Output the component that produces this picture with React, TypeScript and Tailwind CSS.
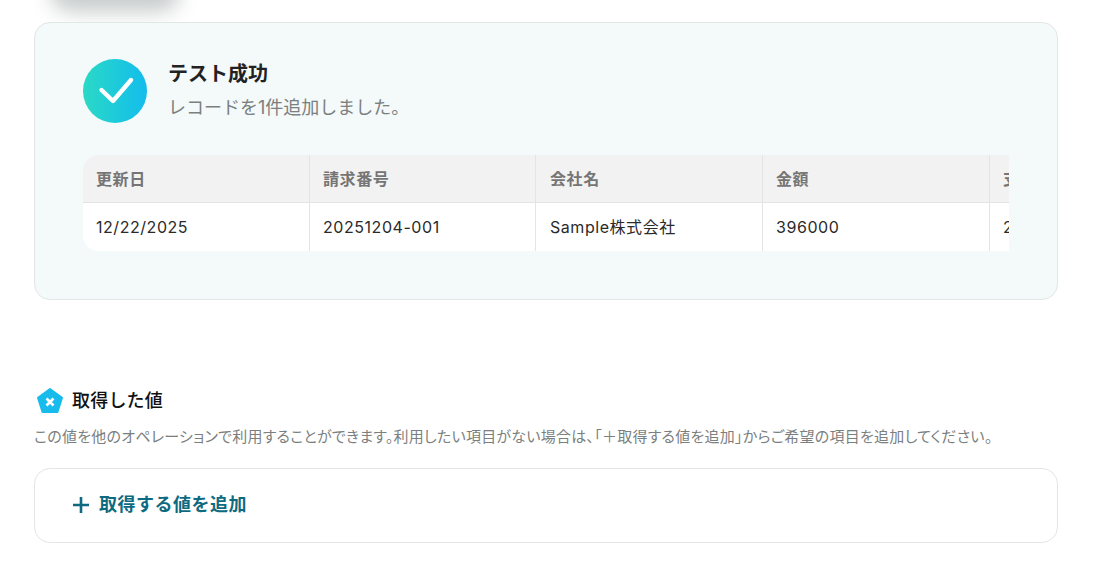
import React from 'react';

const columns = [
  { label: '更新日', value: '12/22/2025', width: 'w-[226px]', pad: 'pl-[13px]' },
  { label: '請求番号', value: '20251204-001', width: 'w-[226px]', pad: 'pl-[13px]' },
  { label: '会社名', value: 'Sample株式会社', width: 'w-[227px]', pad: 'pl-[14px]' },
  { label: '金額', value: '396000', width: 'w-[227px]', pad: 'pl-[13px]' },
  { label: '支払期日', value: '2025/12/31', width: 'w-[227px]', pad: 'pl-[13px]' },
];

const font = "font-['Inter','Noto_Sans_CJK_JP',sans-serif]";

export default function App() {
  return (
    <div className={`relative h-[564px] w-[1110px] overflow-hidden bg-white ${font}`}>
      {/* shadow of the element scrolled off the top */}
      <div className="absolute left-[50px] top-[-30px] h-[42px] w-[130px] rounded-full bg-[#a4abab] opacity-60 blur-[10px]" />

      <div className="relative flex flex-col px-[34px] pt-[22px]">
        <section className="h-[278px] w-[1024px] rounded-[16px] border border-[#e3e6e6] bg-[#f4f9f9] px-[48px] pt-[36px]">
          <div className="flex items-center gap-[21px]">
            <div className="flex h-[64px] w-[64px] items-center justify-center rounded-full bg-gradient-to-r from-[#2bd9c5] to-[#14bcec]">
              <svg width="64" height="64" viewBox="0 0 64 64" fill="none">
                <path d="M18.5 31L30 42L48 21" stroke="white" strokeWidth="4.4" strokeLinecap="round" strokeLinejoin="round" />
              </svg>
            </div>
            <div className="flex flex-col gap-[6px] pb-[2px]">
              <h2 className="text-[20px] leading-[30px] font-bold text-[#222222]">テスト成功</h2>
              <p className="text-[18px] leading-[26px] text-[#7b7f80]">レコードを1件追加しました。</p>
            </div>
          </div>

          <div className="mt-[32px] flex w-[926px] overflow-hidden rounded-l-[16px]">
            {columns.map((col, i) => (
              <div key={col.label} className={`flex shrink-0 flex-col ${col.width} ${i > 0 ? 'border-l border-[#e3e4e4]' : ''}`}>
                <div className={`flex h-[48px] items-center border-b border-[#e3e4e4] bg-[#f2f2f2] text-[16px] font-semibold tracking-[0.6px] whitespace-nowrap text-[#757575] ${col.pad}`}>
                  {col.label}
                </div>
                <div className={`flex h-[48px] items-center bg-white text-[16px] tracking-[0.55px] whitespace-nowrap text-[#2a2a2a] ${col.pad}`}>
                  {col.value}
                </div>
              </div>
            ))}
          </div>
        </section>

        <div className="mt-[87px] flex items-center gap-[8px] pl-[2px]">
          <svg width="28" height="28" viewBox="0 0 28 28">
            <path d="M14 2L26 10.7L21.5 25H6.5L2 10.7Z" fill="#18bcec" stroke="#18bcec" strokeWidth="2" strokeLinejoin="round" />
            <path d="M10.5 11.5L17.5 18.5M17.5 11.5L10.5 18.5" stroke="white" strokeWidth="2.6" />
          </svg>
          <h3 className="text-[18px] leading-[28px] font-medium tracking-[0.2px] text-[#111111]">取得した値</h3>
        </div>

        <p className="mt-[12px] text-[15px] leading-[20px] tracking-[0.25px] whitespace-nowrap text-[#7b7f80] [font-feature-settings:'palt']">
          この値を他のオペレーションで利用することができます。利用したい項目がない場合は、「＋取得する値を追加」からご希望の項目を追加してください。
        </p>

        <button className="mt-[21px] flex h-[75px] w-[1024px] items-center gap-[8px] rounded-[16px] border border-[#e3e6e6] bg-white pb-[2px] pl-[36px]">
          <svg width="20" height="20" viewBox="0 0 20 20" fill="none">
            <path d="M10 2V18M2 10H18" stroke="#0e6a80" strokeWidth="2.6" />
          </svg>
          <span className="text-[18px] font-semibold tracking-[0.5px] text-[#0e6a80]">取得する値を追加</span>
        </button>
      </div>
    </div>
  );
}
